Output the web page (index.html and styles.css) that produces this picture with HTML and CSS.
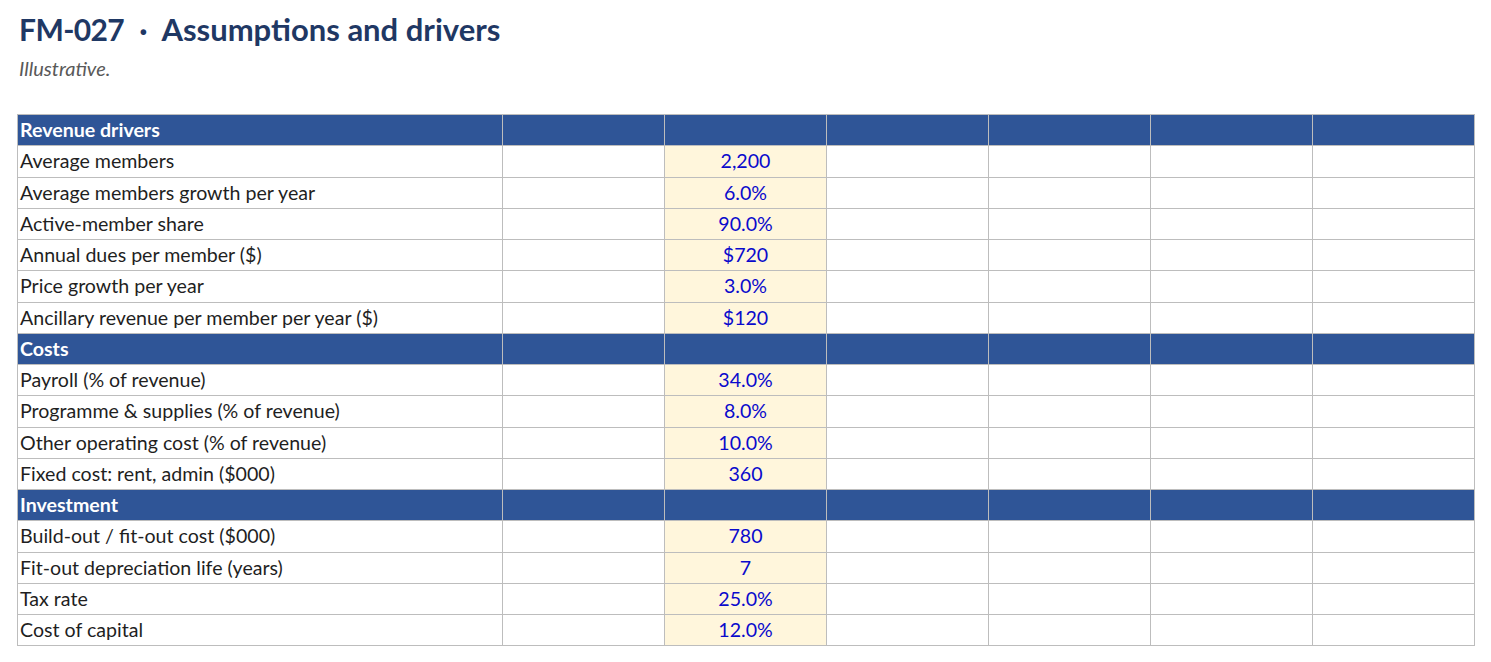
FILE: index.html
```html
<!DOCTYPE html>
<html>
<head>
<meta charset="utf-8">
<link rel="stylesheet" href="styles.css">
</head>
<body>
<h1 class="title"><span class="code">FM-027</span><span class="dot">·</span><span class="name">Assumptions and drivers</span></h1>
<p class="sub">Illustrative.</p>
<table class="sheet">
<colgroup><col class="c-label"><col class="c-num"><col class="c-num"><col class="c-num"><col class="c-num"><col class="c-num"><col class="c-num"></colgroup>
<tbody>
<tr class="sec"><td>Revenue drivers</td><td></td><td></td><td></td><td></td><td></td><td></td></tr>
<tr><td>Average members</td><td></td><td class="in">2,200</td><td></td><td></td><td></td><td></td></tr>
<tr><td>Average members growth per year</td><td></td><td class="in">6.0%</td><td></td><td></td><td></td><td></td></tr>
<tr><td>Active-member share</td><td></td><td class="in">90.0%</td><td></td><td></td><td></td><td></td></tr>
<tr><td>Annual dues per member ($)</td><td></td><td class="in">$720</td><td></td><td></td><td></td><td></td></tr>
<tr><td>Price growth per year</td><td></td><td class="in">3.0%</td><td></td><td></td><td></td><td></td></tr>
<tr><td>Ancillary revenue per member per year ($)</td><td></td><td class="in">$120</td><td></td><td></td><td></td><td></td></tr>
<tr class="sec"><td>Costs</td><td></td><td></td><td></td><td></td><td></td><td></td></tr>
<tr><td>Payroll (% of revenue)</td><td></td><td class="in">34.0%</td><td></td><td></td><td></td><td></td></tr>
<tr><td>Programme &amp; supplies (% of revenue)</td><td></td><td class="in">8.0%</td><td></td><td></td><td></td><td></td></tr>
<tr><td>Other operating cost (% of revenue)</td><td></td><td class="in">10.0%</td><td></td><td></td><td></td><td></td></tr>
<tr><td>Fixed cost: rent, admin ($000)</td><td></td><td class="in">360</td><td></td><td></td><td></td><td></td></tr>
<tr class="sec"><td>Investment</td><td></td><td></td><td></td><td></td><td></td><td></td></tr>
<tr><td>Build-out / fit-out cost ($000)</td><td></td><td class="in">780</td><td></td><td></td><td></td><td></td></tr>
<tr><td>Fit-out depreciation life (years)</td><td></td><td class="in">7</td><td></td><td></td><td></td><td></td></tr>
<tr><td>Tax rate</td><td></td><td class="in">25.0%</td><td></td><td></td><td></td><td></td></tr>
<tr><td>Cost of capital</td><td></td><td class="in">12.0%</td><td></td><td></td><td></td><td></td></tr>
</tbody>
</table>
</body>
</html>
```
FILE: styles.css
```css
html, body {
  margin: 0;
  padding: 0;
  background: #ffffff;
}
body {
  font-family: Lato, "Liberation Sans", sans-serif;
  padding: 10px 17px 0 17px;
}
.title {
  margin: 0 0 0 2px;
  font-size: 30px;
  font-weight: 700;
  color: #1f3864;
  line-height: 38px;
  display: flex;
  align-items: baseline;
}
.title .code {
  letter-spacing: -0.6px;
}
.title .dot {
  margin: 0 14px 0 15px;
}
.title .name {
  font-size: 31px;
}
.sub {
  margin: 9px 0 0 2px;
  font-size: 20px;
  font-style: italic;
  color: #595959;
  line-height: 22px;
}
.sheet {
  margin-top: 35px;
  border-collapse: collapse;
  table-layout: fixed;
  width: 1458px;
  font-size: 19.6px;
  color: #1f1f1f;
}
.c-label { width: 485px; }
.c-num { width: 162px; }
.sheet td {
  border: 1px solid #bdbdbd;
  height: 30.25px;
  padding: 0 2px;
  line-height: 22px;
  white-space: nowrap;
  overflow: hidden;
}
.sheet tr.sec td {
  background: #2f5597;
  color: #ffffff;
  font-weight: 700;
}
.sheet td.in {
  background: #fff6dc;
  color: #0a0acc;
  text-align: center;
}
```
